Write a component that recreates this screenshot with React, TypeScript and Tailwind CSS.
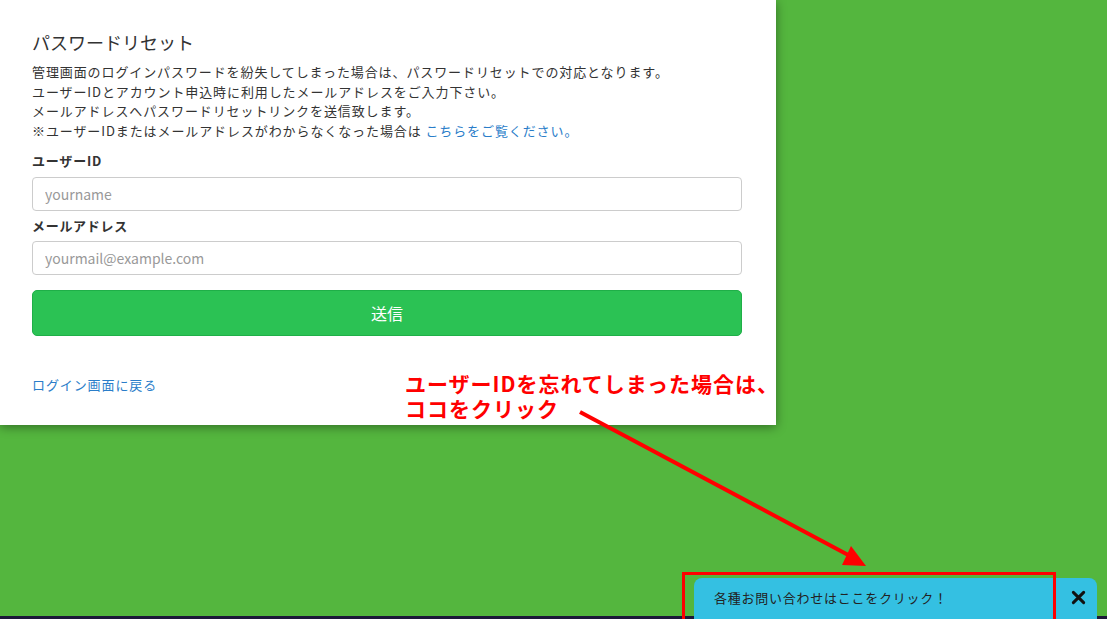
import React from 'react'

const jp = { fontFamily: '"Noto Sans CJK JP", "Noto Sans", sans-serif' }

export default function App() {
  return (
    <div className="relative w-full h-[619px] overflow-hidden bg-[#54b63e] flex flex-col" style={jp}>
      {/* reset card */}
      <div className="flex-1">
        <div className="w-[776px] bg-white pl-[32px] pr-[34px] pt-[29px] pb-[30px] shadow-[0_2px_10px_rgba(0,0,0,0.4)]">
          <h1 className="text-[18px] leading-[26px] text-[#333]">パスワードリセット</h1>
          <p className="mt-[7px] text-[13px] leading-[19.7px] tracking-[0.9px] text-[#333]">
            管理画面のログインパスワードを紛失してしまった場合は、パスワードリセットでの対応となります。<br />
            ユーザーIDとアカウント申込時に利用したメールアドレスをご入力下さい。<br />
            メールアドレスへパスワードリセットリンクを送信致します。<br />
            ※ユーザーIDまたはメールアドレスがわからなくなった場合は <a className="text-[#2a7dc9]">こちらをご覧ください。</a>
          </p>
          <label className="block mt-[10px] text-[13px] leading-[20px] tracking-[0.8px] font-bold text-[#333]">ユーザーID</label>
          <input
            className="block mt-[6px] w-full h-[34px] border border-[#ccc] rounded-[4px] px-[12px] text-[14px] placeholder:text-[#999] outline-none"
            placeholder="yourname"
          />
          <label className="block mt-[5px] text-[13px] leading-[20px] tracking-[0.7px] font-bold text-[#333]">メールアドレス</label>
          <input
            className="block mt-[5px] w-full h-[34px] border border-[#ccc] rounded-[4px] px-[12px] text-[14px] placeholder:text-[#999] outline-none"
            placeholder="yourmail@example.com"
          />
          <button className="block mt-[15px] w-full h-[46px] bg-[#2bc254] border border-[#1faf48] rounded-[5px] text-white text-[16px]">
            送信
          </button>
          <a className="block w-fit mt-[39px] text-[13px] leading-[20px] tracking-[0.9px] text-[#2a7dc9]">ログイン画面に戻る</a>
        </div>
      </div>
      <div className="h-[3px] bg-[#1c1838]" />

      {/* annotation */}
      <div className="absolute left-[405px] top-[371px] text-[21px] leading-[25px] tracking-[1px] font-bold text-[#ff0000]">
        ユーザーIDを忘れてしまった場合は、<br />ココをクリック
      </div>
      <svg className="absolute left-0 top-0" width="1107" height="619">
        <line x1="580" y1="412" x2="852" y2="557" stroke="#ff0000" strokeWidth="4" />
        <polygon points="851,546 842,565 866,566" fill="#ff0000" />
      </svg>

      {/* contact banner */}
      <div className="absolute left-[694px] top-[578px] w-[403px] h-[45px] rounded-t-[8px] bg-[#34c0e2] flex items-start pt-[11px] pl-[20px] pr-[11px]">
        <span className="flex-1 text-[13px] leading-[18px] tracking-[0.75px] text-[#222]">各種お問い合わせはここをクリック！</span>
        <svg width="15" height="15" viewBox="0 0 16 16" className="mt-[1px]">
          <path d="M2.5 2.5 L13.5 13.5 M13.5 2.5 L2.5 13.5" stroke="#111" strokeWidth="3.2" strokeLinecap="round" />
        </svg>
      </div>
      <div className="absolute left-[682px] top-[572px] w-[374px] h-[60px] border-[3px] border-[#ff0000]" />
    </div>
  )
}
